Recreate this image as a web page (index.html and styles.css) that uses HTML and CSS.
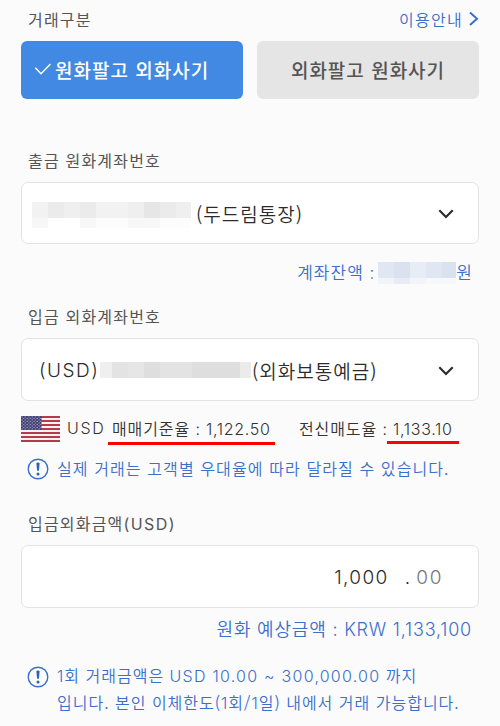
FILE: index.html
```html
<!DOCTYPE html>
<html lang="ko">
<head>
    <meta charset="UTF-8">
    <meta name="viewport" content="width=device-width, initial-scale=1.0">
    <title>외화 거래</title>
    <link rel="stylesheet" href="styles.css">
</head>
<body>

<div class="title-row">
    <span class="label">거래구분</span>
    <a class="guide">이용안내
        <svg width="10" height="16" viewBox="0 0 10 16"><path d="M1 1.4 L8 7.7 L1 14" fill="none" stroke="#3a6fcb" stroke-width="2"/></svg>
    </a>
</div>

<div class="tabs">
    <button class="tab active">
        <svg width="18" height="14" viewBox="0 0 18 14"><path d="M1.3 5.8 L7 11.7 L16.5 2" fill="none" stroke="#fff" stroke-width="1.4"/></svg><span>원화팔고 외화사기</span>
    </button>
    <button class="tab"><span>외화팔고 원화사기</span></button>
</div>

<div class="label label-from">출금 원화계좌번호</div>
<div class="box select select-from">
    <div class="mask mask-from">
        <i class="c1"></i><i class="c3"></i><i class="c2"></i><i class="c3"></i><i class="c1"></i><i class="c1"></i><i class="c2"></i><i class="c4"></i><i class="c3"></i><i class="c2"></i>
        <i class="c0"></i><i></i><i></i><i class="c0"></i><i class="c00"></i><i class="c00"></i><i class="c0"></i><i class="c0"></i><i class="c00"></i><i class="c00"></i>
    </div>
    <span class="account-from">(두드림통장)</span>
    <svg class="arrow" width="16" height="10" viewBox="0 0 16 10"><path d="M1.3 1.2 L8 7.9 L14.7 1.2" fill="none" stroke="#2b2b2b" stroke-width="2.1"/></svg>
</div>
<div class="balance">
    <span>계좌잔액 <span class="en">:</span></span>
    <div class="mask mask-balance">
        <i class="b2"></i><i class="b3"></i><i class="b1"></i><i class="b2"></i><i class="b3"></i>
        <i class="b0"></i><i class="b1"></i><i class="b0"></i><i class="b00"></i><i class="b00"></i>
    </div>
    <span>원</span>
</div>

<div class="label label-to">입금 외화계좌번호</div>
<div class="box select select-to">
    <span class="en usd">(USD)</span>
    <div class="mask mask-to">
        <i class="c2"></i><i class="c5"></i><i class="c4"></i><i class="c6"></i><i class="c5"></i><i class="c5"></i><i class="c6"></i><i class="c6"></i><i class="c6"></i><i class="c3"></i>
    </div>
    <span class="account-to">(외화보통예금)</span>
    <svg class="arrow" width="16" height="10" viewBox="0 0 16 10"><path d="M1.3 1.2 L8 7.9 L14.7 1.2" fill="none" stroke="#2b2b2b" stroke-width="2.1"/></svg>
</div>

<div class="rates">
    <svg class="flag" width="39" height="26" viewBox="0 0 39 26">
        <defs>
            <pattern id="stars" width="3.4" height="3" patternUnits="userSpaceOnUse">
                <circle cx="1" cy=".9" r=".65" fill="#b4b4d6"/>
                <circle cx="2.7" cy="2.4" r=".65" fill="#b4b4d6"/>
            </pattern>
        </defs>
        <rect width="39" height="26" fill="#f8f1f2"/>
        <path d="M0 1H39M0 5H39M0 9H39M0 13H39M0 17H39M0 21H39M0 25H39" stroke="#b43a4d" stroke-width="2"/>
        <rect width="20.5" height="14" fill="#3e3d70"/>
        <rect width="20.5" height="14" fill="url(#stars)"/>
    </svg>
    <span class="en cur">USD</span>
    <span class="rate base">매매기준율 <span class="en">: 1,122.50</span></span>
    <span class="rate-name">전신매도율 <span class="en">:</span></span>
    <span class="rate sell"><span class="en">1,133.10</span></span>
</div>

<div class="notice">
    <svg width="22" height="22" viewBox="0 0 22 22"><circle cx="11" cy="11" r="9.8" fill="none" stroke="#3a6fcb" stroke-width="1.4"/><path d="M9.4 5.6 Q9.4 4.4 11 4.4 Q12.6 4.4 12.6 5.6 L11.9 12.7 H10.1 Z" fill="#2a62c6"/><circle cx="11" cy="16" r="1.5" fill="#2a62c6"/></svg>
    <p class="line1">실제 거래는 고객별 우대율에 따라 달라질 수 있습니다.</p>
</div>

<div class="label label-amount">입금외화금액<span class="en">(USD)</span></div>
<div class="box amount">
    <span class="en whole">1,000</span>
    <span class="en dot">.</span>
    <span class="en cents">00</span>
</div>
<div class="expected">원화 예상금액 <span class="en">: KRW 1,133,100</span></div>

<div class="notice limit">
    <svg width="22" height="22" viewBox="0 0 22 22"><circle cx="11" cy="11" r="9.8" fill="none" stroke="#3a6fcb" stroke-width="1.4"/><path d="M9.4 5.6 Q9.4 4.4 11 4.4 Q12.6 4.4 12.6 5.6 L11.9 12.7 H10.1 Z" fill="#2a62c6"/><circle cx="11" cy="16" r="1.5" fill="#2a62c6"/></svg>
    <p><span class="en">1</span>회 거래금액은 <span class="en range">USD 10.00 ~ 300,000.00</span> 까지<br>입니다. 본인 이체한도(<span class="en">1</span>회/<span class="en">1</span>일) 내에서 거래 가능합니다.</p>
</div>

</body>
</html>
```
FILE: styles.css
```css
* {
    box-sizing: border-box;
}

body {
    background-color: #fbfbfb;
    font-family: 'Noto Sans CJK KR', sans-serif;
    font-size: 16px;
    font-weight: 350;
    line-height: 20px;
    color: #333;
    margin: 0;
    padding: 9px 21px 0;
    height: 726px;
    overflow: hidden;
    white-space: nowrap;
}

.en {
    font-family: 'Inter', 'Noto Sans CJK KR', sans-serif;
    font-weight: 300;
}

.title-row {
    display: flex;
    justify-content: space-between;
    height: 20px;
}

.label {
    color: #555;
    font-weight: 400;
    letter-spacing: 1.2px;
    padding-left: 7px;
    height: 20px;
}

.label .en {
    font-weight: 400;
    letter-spacing: 1.4px;
}

.guide {
    display: flex;
    align-items: center;
    gap: 6px;
    color: #3a6fcb;
    letter-spacing: 1.3px;
}

.tabs {
    display: flex;
    gap: 14px;
    margin-top: 12px;
}

.tab {
    flex: 0 0 222px;
    display: flex;
    align-items: center;
    justify-content: center;
    height: 58px;
    padding: 0 0 2px;
    border: none;
    border-radius: 6px;
    background-color: #e5e5e5;
    color: #555;
    font-family: inherit;
    font-size: 19px;
    font-weight: 500;
    letter-spacing: 1px;
}

.tab.active {
    justify-content: flex-start;
    gap: 3px;
    padding-left: 13px;
    background-color: #4189e2;
    color: #fff;
}

.label-from {
    margin-top: 51px;
}

.box {
    display: flex;
    align-items: center;
    height: 63px;
    background-color: #fff;
    border: 1px solid #e3e3e3;
    border-radius: 7px;
    font-size: 19px;
    color: #2b2b2b;
}

.select-from {
    margin-top: 12px;
    height: 62px;
    padding: 2px 24px 0 10px;
}

.select-to {
    margin-top: 12px;
    padding: 2px 24px 0 17px;
}

.arrow {
    margin-left: auto;
}

.mask {
    display: grid;
    flex: none;
}

.mask-from {
    grid-template: 16px 10px / repeat(9, 16px) 15px;
    margin-top: 2px;
}

.mask-to {
    grid-template: 16px / 12px repeat(8, 16px) 11px;
    margin-top: -2px;
}

.mask-balance {
    grid-template: 16px 6px / repeat(4, 16px) 14px;
    margin: 2px 0 0 3px;
}

.c00 { background-color: #fcfcfc; }
.c0 { background-color: #f7f7f7; }
.c1 { background-color: #f2f2f2; }
.c2 { background-color: #efefef; }
.c3 { background-color: #ebebeb; }
.c4 { background-color: #e6e6e6; }
.c5 { background-color: #e3e3e3; }
.c6 { background-color: #dedede; }
.b00 { background-color: #f7f8fa; }
.b0 { background-color: #f1f4f9; }
.b1 { background-color: #e8ecf5; }
.b2 { background-color: #e1e7f2; }
.b3 { background-color: #dae1ef; }

.account-from,
.account-to {
    letter-spacing: 1px;
}

.account-from {
    margin-left: 5px;
}

.account-to {
    margin-left: 1px;
}

.usd {
    width: 61px;
    letter-spacing: 1.5px;
}

.balance {
    display: flex;
    justify-content: flex-end;
    align-items: center;
    height: 22px;
    margin-top: 17px;
    padding-right: 6px;
    font-size: 17px;
    letter-spacing: 1px;
    color: #3a6fcb;
}

.label-to {
    margin-top: 23px;
}

.rates {
    display: flex;
    align-items: center;
    height: 26px;
    margin-top: 15px;
    letter-spacing: 0.9px;
}

.rates > span {
    margin-top: -2px;
}

.flag {
    flex: none;
}

.rates .cur {
    margin-left: 7px;
    width: 45px;
    letter-spacing: 1.7px;
}

.rate {
    position: relative;
}

.rate .en {
    letter-spacing: 0.7px;
}

.rate::after {
    content: '';
    position: absolute;
    height: 3px;
    background-color: #f00;
}

.base {
    width: 187px;
}

.base::after {
    left: -4px;
    top: 24px;
    width: 167px;
}

.rate-name {
    width: 94px;
}

.sell::after {
    left: -6px;
    top: 23px;
    width: 72px;
}

.notice {
    display: flex;
    gap: 8px;
    margin-top: 16px;
    padding-left: 6px;
    color: #3a6fcb;
}

.notice svg {
    flex: none;
}

.notice p {
    margin: -3px 0 0;
    line-height: 26px;
    letter-spacing: 1px;
}

.notice .line1 {
    letter-spacing: 1.1px;
}

.range {
    letter-spacing: 1.25px;
}

.label-amount {
    margin-top: 32px;
}

.amount {
    margin-top: 12px;
    padding: 2px 35px 0 0;
    justify-content: flex-end;
    letter-spacing: 1.2px;
}

.dot {
    margin-left: 16px;
}

.cents {
    margin-left: 5px;
    color: #777;
    letter-spacing: 1.6px;
}

.whole {
    letter-spacing: 1.4px;
}

.expected {
    margin-top: 10px;
    padding-right: 7px;
    text-align: right;
    font-size: 18px;
    letter-spacing: 0.8px;
    color: #3a6fcb;
}

.limit {
    margin-top: 26px;
}

.notice.limit p {
    margin-top: -4px;
}
```
